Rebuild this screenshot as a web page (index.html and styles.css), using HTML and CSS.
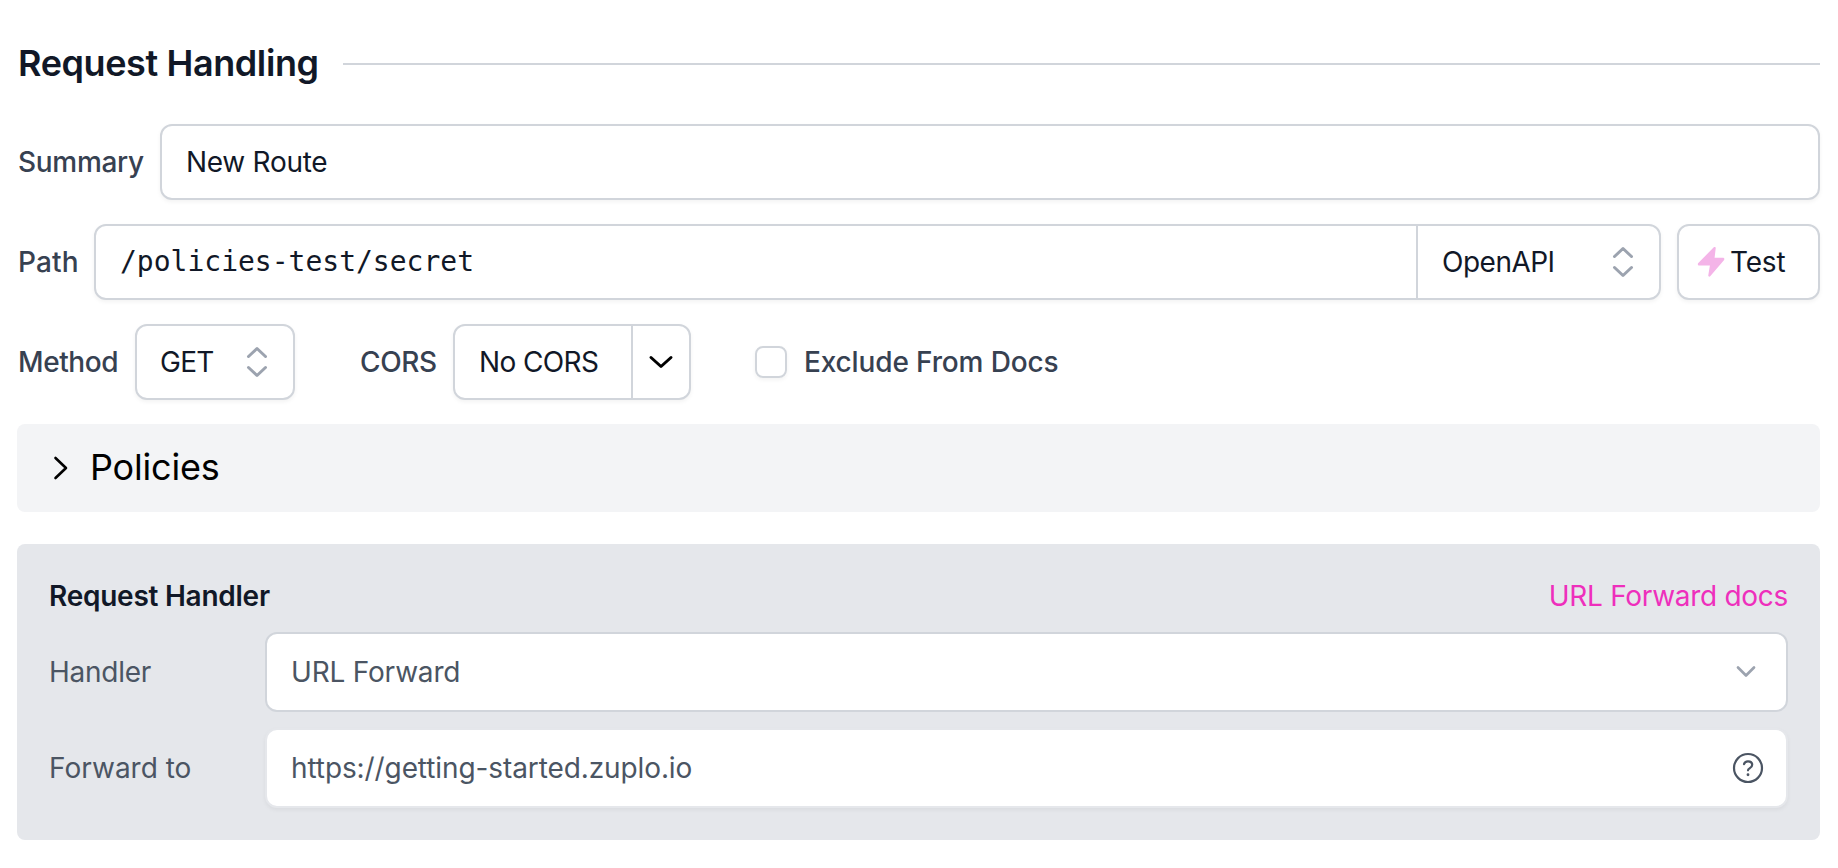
FILE: index.html
```html
<!DOCTYPE html>
<html lang="en">
<head>
<meta charset="utf-8">
<title>Request Handling</title>
<link rel="stylesheet" href="styles.css">
</head>
<body>
<main class="page">
  <header class="heading"><h1 class="title">Request Handling</h1><span class="rule"></span></header>
  <div class="row">
    <label class="label label-summary">Summary</label>
    <div class="field grow"><span class="t-route">New Route</span></div>
  </div>
  <div class="row">
    <label class="label label-path">Path</label>
    <div class="group grow">
      <div class="segment grow mono">/policies-test/secret</div>
      <div class="segment openapi"><span class="t-openapi">OpenAPI</span>
        <svg class="updown" viewBox="0 0 24 32"><path d="M3.500 10.500 12 2.500l8.500 8M3.500 21.500l8.500 8 8.500-8"/></svg></div>
    </div>
    <button class="field test"><svg class="bolt" viewBox="0 0 28 32"><path d="M16.800 1.300c.9-.9 2.200-.2 1.900 1L17.600 11.700h8.300c1.400 0 2 1.500 1 2.500L13.200 30.300c-.9.900-2.200.1-1.900-1.100l1.600-9.700H2.200c-1.300 0-1.900-1.500-.9-2.500z"/></svg>Test</button>
  </div>
  <div class="row">
    <label class="label label-method">Method</label>
    <div class="field method"><span class="t-get">GET</span>
      <svg class="updown" viewBox="0 0 24 32"><path d="M3.500 10.500 12 2.500l8.500 8M3.500 21.500l8.500 8 8.500-8"/></svg></div>
    <label class="label label-cors">CORS</label>
    <div class="group">
      <div class="segment nocors">No CORS</div>
      <div class="segment drop"><svg class="chev" viewBox="0 0 28 16"><path d="m4 3.500 10 9 10-9"/></svg></div>
    </div>
    <span class="checkbox"></span>
    <label class="label label-exclude">Exclude From Docs</label>
  </div>
  <section class="policies">
    <svg class="caret" viewBox="0 0 16 28"><path d="m2.500 4 10.500 10-10.500 10"/></svg>
    <span class="t-policies">Policies</span>
  </section>
  <section class="handler">
    <div class="handler-head"><h2 class="subtitle">Request Handler</h2><a class="link">URL Forward docs</a></div>
    <div class="handler-row">
      <label class="hlabel t-handler">Handler</label>
      <div class="field hfield"><span class="t-forward">URL Forward</span><svg class="chev-sm" viewBox="0 0 24 16"><path d="m4 3.500 8 8 8-8"/></svg></div>
    </div>
    <div class="handler-row">
      <label class="hlabel">Forward to</label>
      <div class="field hfield plain"><span class="t-https">https://getting-started.zuplo.io</span>
        <svg class="help" viewBox="0 0 32 32"><circle cx="16" cy="16" r="14"/><path d="M12 12.200c.6-2.100 2.300-3 4.200-2.900 2.300.1 4 1.600 4 3.500 0 1.700-1 2.600-2.300 3.300-1 .5-1.900.9-1.900 2.200"/><path class="dot" d="M16 22.700v.1"/></svg></div>
    </div>
  </section>
</main>
</body>
</html>
```

FILE: styles.css
```css
* { box-sizing: border-box; }
body { margin: 0; background: #fff; color: #111827; font: 400 28px/40px Inter, sans-serif; white-space: nowrap; }
.page { padding: 36px 18px 0 17px; }
h1, h2 { margin: 0; font: inherit; }
.heading { display: flex; align-items: center; height: 56px; margin-bottom: 32px; }
.title { width: 326px; flex: none; padding: 0 0 2px 1px; font-size: 36px; font-weight: 600; letter-spacing: -.4px; }
.rule { flex: 1; height: 2px; background: #d1d5db; }
.row { display: flex; align-items: center; height: 76px; margin-bottom: 24px; }
.grow { flex: 1; }
.label { flex: none; padding-left: 1px; color: #374151; font-weight: 500; }
.label-summary { width: 143px; letter-spacing: -.3px; }
.label-path { width: 77px; letter-spacing: .15px; }
.label-method { width: 118px; letter-spacing: -.4px; }
.label-cors { width: 94px; margin-left: 64px; letter-spacing: -.4px; }
.label-exclude { padding-left: 0; letter-spacing: -.14px; }
.field, .group { display: flex; align-items: center; height: 76px; border: 2px solid #d1d5db; border-radius: 12px; background: #fff; box-shadow: 0 2px 4px rgba(0,0,0,.05); }
.field { padding: 0 24px; }
.segment { display: flex; align-items: center; height: 100%; padding-left: 24px; }
.segment + .segment { border-left: 2px solid #d1d5db; }
.mono { font-family: "DejaVu Sans Mono", monospace; }
.t-route { letter-spacing: -.28px; }
.t-openapi { letter-spacing: -.5px; }
.openapi { width: 243px; justify-content: space-between; padding-right: 24px; }
.updown { width: 24px; height: 32px; fill: none; stroke: #9ca3af; stroke-width: 3; stroke-linecap: round; stroke-linejoin: round; }
.test { width: 143px; margin-left: 16px; padding: 0 0 0 18px; color: #111827; font: inherit; letter-spacing: -.2px; }
.bolt { width: 28px; height: 32px; margin-right: 5px; fill: #f4b4e8; }
.method { width: 160px; justify-content: space-between; }
.t-get { margin-left: -1px; letter-spacing: -.7px; }
.nocors { width: 176px; letter-spacing: -.6px; }
.drop { width: 58px; justify-content: center; padding: 0; }
.chev { width: 28px; height: 16px; fill: none; stroke: #000; stroke-width: 3; stroke-linecap: round; stroke-linejoin: round; }
.checkbox { width: 32px; height: 32px; margin: 0 17px 0 64px; border: 2px solid #d1d5db; border-radius: 8px; box-shadow: 0 2px 4px rgba(0,0,0,.05); }
.policies { display: flex; align-items: center; height: 88px; margin-bottom: 32px; padding-left: 36px; border-radius: 8px; background: #f3f4f6; color: #000; font-size: 36px; }
.t-policies { padding-bottom: 2px; letter-spacing: -.2px; }
.caret { width: 16px; height: 28px; margin-right: 21px; fill: none; stroke: #000; stroke-width: 2.6; stroke-linecap: round; stroke-linejoin: round; }
.handler { height: 296px; padding: 32px; border-radius: 8px; background: #e5e7eb; }
.handler-head { display: flex; justify-content: space-between; height: 40px; margin-bottom: 16px; }
.subtitle { font-weight: 600; letter-spacing: -.25px; }
.link { color: #ee2fbc; letter-spacing: -.3px; }
.handler-row { display: flex; align-items: center; height: 80px; margin-bottom: 16px; color: #4b5563; }
.hlabel { width: 216px; flex: none; }
.t-handler { letter-spacing: -.25px; }
.hfield { flex: 1; height: 80px; justify-content: space-between; box-shadow: none; }
.t-forward { letter-spacing: -.2px; }
.t-https { letter-spacing: -.1px; }
.plain { border-color: #e5e7eb; box-shadow: 0 2px 4px rgba(0,0,0,.05); }
.chev-sm { width: 24px; height: 16px; margin-right: 4px; fill: none; stroke: #9ca3af; stroke-width: 2.7; stroke-linecap: round; stroke-linejoin: round; }
.help { width: 32px; height: 32px; margin-right: -2px; fill: none; stroke: #4b5563; stroke-width: 2.2; stroke-linecap: round; }
.help .dot { stroke-width: 2.8; }
```
